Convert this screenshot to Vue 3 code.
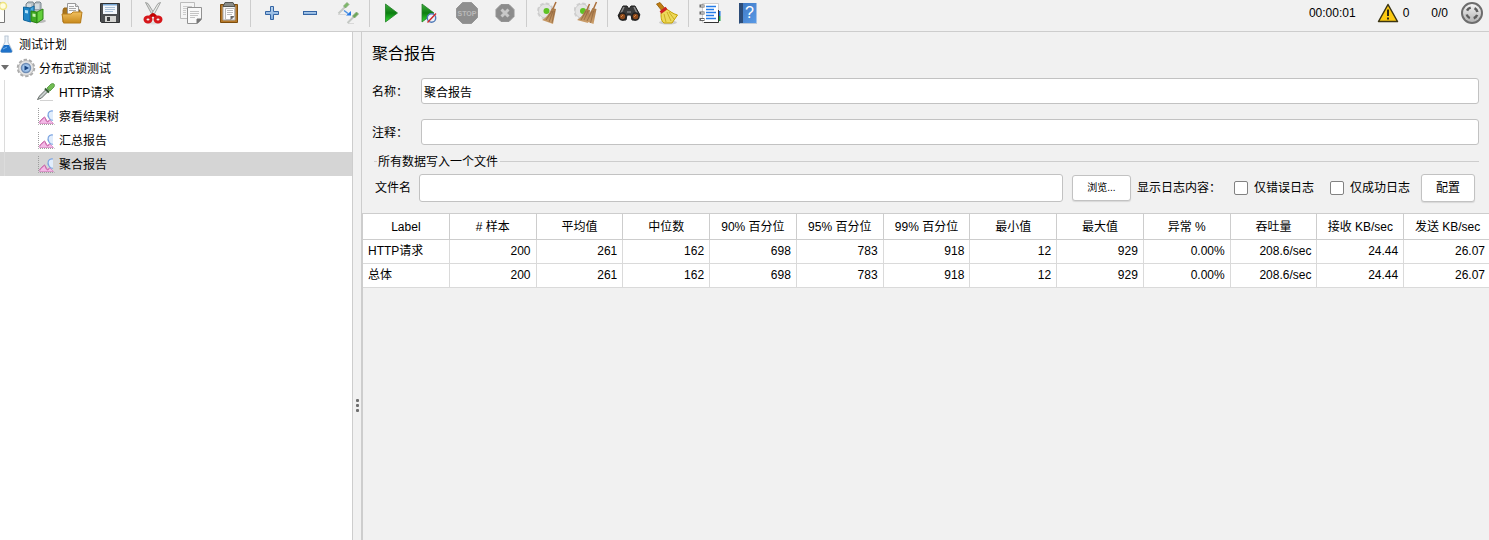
<script setup>
import { ref } from 'vue'

const name = ref('聚合报告')
const comment = ref('')
const fileName = ref('')
const onlyErrors = ref(false)
const onlySuccess = ref(false)
const selected = ref('aggregate')

const tree = [
  { id: 'plan', label: '测试计划', icon: 'flask', level: 0 },
  { id: 'group', label: '分布式锁测试', icon: 'gear', level: 1 },
  { id: 'http', label: 'HTTP请求', icon: 'pipette', level: 2 },
  { id: 'viewtree', label: '察看结果树', icon: 'chart', level: 2 },
  { id: 'summary', label: '汇总报告', icon: 'chart', level: 2 },
  { id: 'aggregate', label: '聚合报告', icon: 'chart', level: 2 },
]

const columns = [
  'Label', '# 样本', '平均值', '中位数', '90% 百分位', '95% 百分位', '99% 百分位',
  '最小值', '最大值', '异常 %', '吞吐量', '接收 KB/sec', '发送 KB/sec',
]
const values = ['200', '261', '162', '698', '783', '918', '12', '929', '0.00%', '208.6/sec', '24.44', '26.07']
const rows = [['HTTP请求', ...values], ['总体', ...values]]
</script>

<template>
  <div class="app">
    <svg class="defs" width="0" height="0" aria-hidden="true">
      <defs>
        <linearGradient id="gFolder" x1="0" y1="0" x2="0" y2="1"><stop offset="0" stop-color="#f0c060" /><stop offset="1" stop-color="#c98a1c" /></linearGradient>
        <linearGradient id="gPlay" x1="0" y1="0" x2="0" y2="1"><stop offset="0" stop-color="#3fae3f" /><stop offset=".5" stop-color="#0c7d10" /><stop offset="1" stop-color="#35e035" /></linearGradient>
        <linearGradient id="gPlus" x1="0" y1="0" x2="0" y2="1"><stop offset="0" stop-color="#b9d3ee" /><stop offset="1" stop-color="#7fabdb" /></linearGradient>
        <linearGradient id="gBook" x1="0" y1="0" x2="1" y2="1"><stop offset="0" stop-color="#3c78c4" /><stop offset="1" stop-color="#5a9ae6" /></linearGradient>
        <linearGradient id="gGrey" x1="0" y1="0" x2="0" y2="1"><stop offset="0" stop-color="#f4f4f4" /><stop offset="1" stop-color="#b4b4b4" /></linearGradient>
        <linearGradient id="gStraw" x1="0" y1="0" x2="0" y2="1"><stop offset="0" stop-color="#a87848" /><stop offset="1" stop-color="#cda06c" /></linearGradient>
      </defs>
    </svg>

    <header class="toolbar">
      <div class="tools">
        <button class="tool" type="button" aria-label="新建">
          <svg viewBox="0 0 24 24"><path d="M4 2h16.500v19.500H4z" fill="#fdfdfb" stroke="#777" /><circle cx="19" cy="5" r="3.500" fill="#fffde0" stroke="#efe480" stroke-width="1.500" /></svg>
        </button>
        <button class="tool" type="button" aria-label="模板">
          <svg viewBox="0 0 24 24">
            <ellipse cx="16" cy="20" rx="8" ry="2" fill="#bbb" />
            <path d="M4 3l2-2h5l1 2v6H4zM12 3l2-2h4l1 1v7h-7z" fill="#b9c3c9" stroke="#7b878e" />
            <path d="M6 3v6M8 3v6M14 3v5M16 3v5" stroke="#eef3f6" />
            <path d="M1.500 6l7 1v14l-7-2z" fill="#2187c6" stroke="#0f659d" /><path d="M8 7l4-2v13l-4 3z" fill="#4aa8df" stroke="#0f659d" />
            <path d="M3 9l3 .5v3l-3-.5z" fill="#aee0f8" />
            <path d="M9 10l6 1v11l-6-2z" fill="#3faa22" stroke="#2b8412" /><path d="M15 11l6-3v10l-6 4z" fill="#63cf3c" stroke="#2b8412" />
            <path d="M10.500 12.500l3 .5v3l-3-.5z" fill="#c8f3ae" />
          </svg>
        </button>
        <button class="tool" type="button" aria-label="打开">
          <svg viewBox="0 0 24 24">
            <path d="M3 9l1-2h5l1 2h10v12H3z" fill="#a8751d" stroke="#94651a" />
            <path d="M7.500 2.500h8l3 3v8h-11z" fill="#fafafa" stroke="#999" /><path d="M15.500 2.500v3h3" fill="#ddd" stroke="#999" /><path d="M9 5.500h5M9 7.500h7M9 9.500h7" stroke="#aaa" />
            <path d="M2 13h9l2-2h9l-1.500 11h-17z" fill="url(#gFolder)" stroke="#b67c1b" />
          </svg>
        </button>
        <button class="tool" type="button" aria-label="保存">
          <svg viewBox="0 0 24 24">
            <path d="M2.500 2.500h19v19h-18l-1-1z" fill="#4c4e50" stroke="#303234" />
            <path d="M5 3h14v10H5z" fill="#f3f7fb" /><path d="M5 3h14v1.500H5z" fill="#78a7d4" /><path d="M7 6.500h10M7 8.500h10M7 10.500h8" stroke="#a9c0d7" />
            <path d="M7 15h11v6H7z" fill="#d6d6d3" /><path d="M9 16h3v4H9z" fill="#3b3d3f" />
          </svg>
        </button>
        <span class="sep"></span>
        <button class="tool" type="button" aria-label="剪切">
          <svg viewBox="0 0 24 24">
            <ellipse cx="12" cy="22" rx="7" ry="1.500" fill="#ddd" />
            <path d="M4.500 1.500l2.500 1 7.500 12-2.500 1z" fill="#d8dad8" stroke="#8d8f8d" stroke-width=".8" /><path d="M19.500 1.500l-2.500 1-7.500 12 2.500 1z" fill="#eceeec" stroke="#8d8f8d" stroke-width=".8" />
            <path d="M9 15.500l3-2 3 2" stroke="#c40000" stroke-width="3" fill="none" />
            <ellipse cx="7" cy="18.500" rx="3" ry="2.600" fill="none" stroke="#d6161a" stroke-width="3" /><ellipse cx="17" cy="18.500" rx="3" ry="2.600" fill="none" stroke="#d6161a" stroke-width="3" />
          </svg>
        </button>
        <button class="tool" type="button" aria-label="复制">
          <svg viewBox="0 0 24 24">
            <path d="M1.500 1.500h14v16h-14z" fill="#f5f5f5" stroke="#bcbcbc" /><path d="M4 5.500h9M4 7.500h9M4 9.500h3M4 11.500h3M4 13.500h3" stroke="#ccc" />
            <path d="M8.500 6.500h14v12l-4 4h-10z" fill="#f9f9f9" stroke="#929292" /><path d="M11 10.500h9M11 12.500h9M11 14.500h8M11 16.500h5" stroke="#c4c4c4" /><path d="M22 18l-4 4v-4z" fill="#777" stroke="#777" />
          </svg>
        </button>
        <button class="tool" type="button" aria-label="粘贴">
          <svg viewBox="0 0 24 24">
            <path d="M3.500 3.500h17v18h-17z" fill="#b5782a" stroke="#7d4d0c" /><path d="M6 5h12v14H6z" fill="#f7f7f7" stroke="#aaa" />
            <path d="M8 1.500h8l2 4H6z" fill="#8a8c88" stroke="#555753" />
            <path d="M8.500 7.500h9v8l-3 3h-6z" fill="#fff" stroke="#bbb" /><path d="M10 9.500h6M10 11.500h6M10 13.500h5" stroke="#bbb" /><path d="M17.500 15l-4 4v-4z" fill="#666" />
          </svg>
        </button>
        <span class="sep"></span>
        <button class="tool" type="button" aria-label="展开">
          <svg viewBox="0 0 24 24"><path d="M10.500 5.500h3v5h5v3h-5v5h-3v-5h-5v-3h5z" fill="url(#gPlus)" stroke="#3465a4" stroke-linejoin="round" /></svg>
        </button>
        <button class="tool" type="button" aria-label="折叠">
          <svg viewBox="0 0 24 24"><rect x="5.500" y="10.500" width="13" height="3" fill="url(#gPlus)" stroke="#3465a4" /></svg>
        </button>
        <button class="tool" type="button" aria-label="切换">
          <svg viewBox="0 0 24 24">
            <path d="M2 13.500h8M12 22.500h6" stroke="#d8d8d8" /><path d="M2.500 12.500l7-7" stroke="#c4c8c4" stroke-width="2" /><path d="M7.500 5l3.500-3.500 2 2L9.500 7z" fill="#7ab966" stroke="#89a77a" stroke-width=".8" />
            <path d="M11.500 22l7-7" stroke="#c4c8c4" stroke-width="2" /><path d="M16.500 15l4-4 2 2-4 4z" fill="#6ba758" stroke="#89a77a" stroke-width=".8" />
            <path d="M8 9.500l4 3" stroke="#4e92e2" stroke-width="1.500" /><path d="M10 14.500h5V10z" fill="#2478e4" />
          </svg>
        </button>
        <span class="sep"></span>
        <button class="tool" type="button" aria-label="启动">
          <svg viewBox="0 0 24 24"><path d="M6.500 3l12 9-12 9z" fill="url(#gPlay)" stroke="#237f27" stroke-width=".8" /></svg>
        </button>
        <button class="tool" type="button" aria-label="不停顿开始">
          <svg viewBox="0 0 24 24"><path d="M5 3l12 9-12 9z" fill="url(#gPlay)" stroke="#237f27" stroke-width=".8" /><circle cx="14.500" cy="17" r="4.200" fill="#eef3fa" stroke="#4f79b6" stroke-width="1.400" /><path d="M10.500 21.500l8.500-9" stroke="#d02a2a" stroke-width="1.400" /></svg>
        </button>
        <button class="tool" type="button" aria-label="停止" disabled>
          <svg viewBox="0 0 24 24"><path d="M7.500 1.500h9l6 6v9l-6 6h-9l-6-6v-9z" fill="#8e8e8e" stroke="#969696" /><text x="12" y="15" text-anchor="middle" class="stop-text">STOP</text></svg>
        </button>
        <button class="tool" type="button" aria-label="关闭" disabled>
          <svg viewBox="0 0 24 24"><path d="M8 3.500h8l5 5v7l-5 5H8l-5-5v-7z" fill="#8c8c8c" stroke="#949494" /><path d="M8.500 8.500l7 7M15.500 8.500l-7 7" stroke="#c8c8c8" stroke-width="3" /></svg>
        </button>
        <span class="sep"></span>
        <button class="tool" type="button" aria-label="清除">
          <svg viewBox="0 0 24 24">
            <circle cx="9.500" cy="10" r="7" fill="#e8e8e8" stroke="#d0d0d0" stroke-width="3" stroke-dasharray="3.500 2" /><circle cx="9.500" cy="10" r="7" fill="#e4e4e4" stroke="#c4c4c4" stroke-width=".7" /><circle cx="10.500" cy="10" r="3" fill="#5fc324" />
            <path d="M20 1l-4 9" stroke="#aa703c" stroke-width="1.500" /><path d="M16 7l4 1-3 15-11-4c4-2 7-6 10-12z" fill="url(#gStraw)" /><path d="M16 10l-6 9M17 10l-4 11M18.500 10l-2.500 12" stroke="#8c633d" stroke-width=".7" />
          </svg>
        </button>
        <button class="tool" type="button" aria-label="清除全部">
          <svg viewBox="0 0 24 24">
            <circle cx="8" cy="10" r="7" fill="#e8e8e8" stroke="#d0d0d0" stroke-width="3" stroke-dasharray="3.500 2" /><circle cx="8" cy="10" r="7" fill="#e4e4e4" stroke="#c4c4c4" stroke-width=".7" /><circle cx="9" cy="10" r="3" fill="#5fc324" />
            <path d="M15.500 3l-3 7M22.500 1l-4 9" stroke="#aa703c" stroke-width="1.500" /><path d="M12 8l4 1-2 13-11-3c4-2 6-6 9-11z" fill="url(#gStraw)" /><path d="M18.500 7l4 1-3 15-11-4c4-2 7-6 10-12z" fill="url(#gStraw)" /><path d="M12 10l-5 9M14 10l-4 9M18 10l-5 10M19.500 10l-3 12" stroke="#8c633d" stroke-width=".7" />
          </svg>
        </button>
        <span class="sep"></span>
        <button class="tool" type="button" aria-label="查找">
          <svg viewBox="0 0 24 24">
            <path d="M6 5h4l2 3 2-3h4l5 9-4 5h-4l-1-5h-4l-1 5H5l-4-4z" fill="#3a3a3a" stroke="#1d1d1d" /><path d="M7 6l-3 6M17 6l3 6" stroke="#8b8b8b" stroke-width="1.500" />
            <circle cx="5.500" cy="15.500" r="3.500" fill="#8d4a1c" stroke="#222" stroke-width="1.500" /><circle cx="18.500" cy="15.500" r="3.500" fill="#8d4a1c" stroke="#222" stroke-width="1.500" /><path d="M4 16l2-2M17 16l2-2" stroke="#d58a4a" /><path d="M10 11h4" stroke="#999" />
          </svg>
        </button>
        <button class="tool" type="button" aria-label="重置搜索">
          <svg viewBox="0 0 24 24">
            <ellipse cx="13" cy="21.500" rx="9" ry="2" fill="#ccc" />
            <path d="M1.500 3l3.500-1.500 5 6-3 2.500z" fill="#c17d11" stroke="#8f5902" stroke-width=".8" />
            <path d="M10 7c4 2.500 8 6 12.500 7L17 22H9c-3-2-3-6-3-10z" fill="#edd95a" stroke="#c4a000" /><path d="M9 13l2 8M12 11l4 9M14 11l5 7" stroke="#cbae22" /><path d="M5.500 11.500l6-4.500" stroke="#cc2222" stroke-width="3" />
          </svg>
        </button>
        <span class="sep"></span>
        <button class="tool" type="button" aria-label="函数助手">
          <svg viewBox="0 0 24 24">
            <path d="M20 10h2.500v5H20z" fill="#1870e0" /><path d="M20 15h2.500v5H20z" fill="#18a040" /><path d="M4.500 2.500h16v19h-16z" fill="#fff" stroke="#cfcfcf" /><path d="M20.500 9v12.500H6" fill="none" stroke="#333" />
            <path d="M1.500 5h5M1.500 12h5M1.500 18.500h5" stroke="#666" stroke-width="3" /><path d="M3 5h3M3 12h3M3 18.500h3" stroke="#fff" /><path d="M8 5.500h10M8 8.500h8M8 11.500h10M8 14.500h8M8 17.500h10" stroke="#247ce8" stroke-width="1.400" />
          </svg>
        </button>
        <button class="tool" type="button" aria-label="帮助">
          <svg viewBox="0 0 24 24"><path d="M3.500 2h17v20.500h-17z" fill="url(#gBook)" /><path d="M3 2h4v20.500H3z" fill="#2c4c78" /><path d="M4 22.500h17" stroke="#bfc9d6" /><text x="13.500" y="17" text-anchor="middle" class="help-text">?</text></svg>
        </button>
      </div>
      <div class="status">
        <span class="clock">00:00:01</span>
        <button class="warn" type="button" aria-label="日志">
          <svg viewBox="0 0 22 20"><path d="M11 1.500L20.500 18.500h-19z" fill="#fcca12" stroke="#3b3412" stroke-width="1.500" stroke-linejoin="round" /><path d="M11 6.500v6.500M11 14.500v2" stroke="#2e2a14" stroke-width="2" /></svg>
          <span>0</span>
        </button>
        <span class="threads">0/0</span>
        <svg class="ring" viewBox="0 0 24 24" aria-hidden="true"><circle cx="12" cy="12" r="10" fill="#7c7c7c" stroke="#6d6d6d" stroke-width="2" /><circle cx="12" cy="12" r="9" fill="url(#gGrey)" /><circle cx="12" cy="12" r="5.500" fill="none" stroke="#5d5d5d" stroke-width="2.500" stroke-dasharray="4.640 4" stroke-dashoffset="-2" /></svg>
      </div>
    </header>

    <main class="body">
      <nav class="tree" aria-label="测试计划">
        <button
          v-for="item in tree" :key="item.id" type="button"
          class="node" :class="['level' + item.level, { selected: selected === item.id }]"
          @click="selected = item.id"
        >
          <svg v-if="item.level === 1" class="arrow" viewBox="0 0 10 6"><path d="M1 0h8L5 5z" fill="#6e6e6e" /></svg>
          <svg v-if="item.icon === 'flask'" class="icon" viewBox="0 0 20 20">
            <path d="M11.500 2h4M12 2v6l-4 8q-1 2.500 1 2.500h9q2 0 1-2.500l-4-8V2" fill="#eef4fa" stroke="#b9c6d4" /><path d="M11 11h5l3 6q0 1.500-1 1.500H9q-2 0-1-2.500z" fill="#1f72c9" /><path d="M10 15l4-2" stroke="#75b3ee" />
          </svg>
          <svg v-else-if="item.icon === 'gear'" class="icon" viewBox="0 0 20 20">
            <circle cx="10" cy="10" r="8" fill="none" stroke="#ababab" stroke-width="2.500" stroke-dasharray="3.200 1.830" /><circle cx="10" cy="10" r="7.500" fill="#e2e2e2" stroke="#b4b4b4" stroke-width=".8" /><circle cx="10" cy="10" r="4.500" fill="#a0c4ec" stroke="#6f8db5" stroke-width="1.500" /><path d="M8.500 7.500l4.500 2.500-4.500 2.500z" fill="#17427f" />
          </svg>
          <svg v-else-if="item.icon === 'pipette'" class="icon" viewBox="0 0 20 20">
            <path d="M4 18.500h13" stroke="#d2d2d2" /><path d="M1.500 17.500l2-3.500 7-7 2 2-7 7z" fill="#c9d0cf" stroke="#646b68" /><path d="M9 6.500l4 4" stroke="#345c31" stroke-width="2" /><path d="M11 6l4-4q2-1 3 0t0 3l-4 4z" fill="#72bd53" stroke="#4c923c" stroke-width=".8" />
          </svg>
          <svg v-else class="icon" viewBox="0 0 20 20">
            <path d="M2.500 2v16.500h16" fill="none" stroke="#9d9d9d" stroke-dasharray="1 1" /><path d="M3.500 17.500l1-3 3-3 2 1 2 3 2-2 4 4z" fill="#f3b8e6" stroke="#d486c0" stroke-width=".8" /><path d="M3.500 15.500c3-1 5-7 6-3s2 4 4 2" fill="none" stroke="#c4559f" /><path d="M17 5c-5-1-6 4-4 7q2 3 4 2" fill="#e1edfc" stroke="#7ba4e0" stroke-width="1.200" />
          </svg>
          <span>{{ item.label }}</span>
        </button>
      </nav>

      <div class="divider"><i></i><i></i><i></i></div>

      <section class="panel">
        <form class="form" @submit.prevent>
          <h1>聚合报告</h1>
          <div class="field"><label for="name">名称：</label><input id="name" v-model="name" type="text" /></div>
          <div class="field"><label for="comment">注释：</label><input id="comment" v-model="comment" type="text" /></div>
          <fieldset>
            <legend>所有数据写入一个文件</legend>
            <div class="file-row">
              <label for="file">文件名</label>
              <input id="file" v-model="fileName" type="text" />
              <button class="btn browse" type="button">浏览...</button>
              <span class="log-label">显示日志内容：</span>
              <label class="check"><input v-model="onlyErrors" type="checkbox" />仅错误日志</label>
              <label class="check"><input v-model="onlySuccess" type="checkbox" />仅成功日志</label>
              <button class="btn config" type="button">配置</button>
            </div>
          </fieldset>
        </form>
        <div class="results">
          <table>
            <thead><tr><th v-for="c in columns" :key="c" scope="col">{{ c }}</th></tr></thead>
            <tbody>
              <tr v-for="r in rows" :key="r[0]"><td v-for="(v, i) in r" :key="i">{{ v }}</td></tr>
            </tbody>
          </table>
        </div>
      </section>
    </main>
  </div>
</template>

<style>
body { margin: 0; background: #f1f1f1; }
</style>

<style scoped>
.app {
  display: flex;
  flex-direction: column;
  min-height: 100vh;
  overflow: hidden;
  background: #f1f1f1;
  color: #000;
  font: 12px/16px "Liberation Sans", "Noto Sans CJK SC", sans-serif;
}
.app *, .app *::before { box-sizing: border-box; }
.defs { position: absolute; }
button, input { font: inherit; color: inherit; }
button { padding: 0; border: 0; background: none; }

.toolbar {
  display: flex;
  justify-content: space-between;
  align-items: flex-start;
  height: 32px;
  border-bottom: 1px solid #cdcdcd;
}
.tools { display: flex; margin-left: -23px; }
.tool { display: flex; justify-content: center; align-items: center; width: 38px; height: 26px; }
.tool svg { width: 24px; height: 24px; }
.sep { width: 1px; height: 27px; margin: 0 2px; background: #cdcdcd; }
.stop-text { font: bold 7px "Liberation Sans", sans-serif; fill: #bababa; }
.help-text { font: 16px "Liberation Sans", sans-serif; fill: #fff; }
.status { display: flex; align-items: center; height: 26px; padding-right: 5px; }
.warn { display: flex; align-items: center; gap: 4px; margin: 0 22px 0 21px; }
.warn svg { width: 22px; height: 20px; }
.ring { width: 24px; height: 24px; margin-left: 12px; }

.body { display: flex; flex: 1; }
.tree { width: 352px; flex: none; background: #fff; }
.node { display: flex; align-items: center; width: 100%; height: 24px; text-align: left; white-space: nowrap; }
.node span { padding-top: 2px; }
.node .icon { width: 20px; height: 20px; margin-right: 3px; flex: none; }
.node .arrow { width: 10px; height: 6px; margin-right: 6px; }
.level0 .icon { margin-left: -7px; margin-right: 6px; }
.level2::before { content: ""; width: 1px; height: 24px; margin: 0 31px 0 4px; background: #dcdcdc; }
.selected { background: #d5d5d5; }

.divider {
  display: flex;
  flex-direction: column;
  align-items: center;
  justify-content: center;
  gap: 2px;
  flex: none;
  width: 10px;
  padding-top: 238px;
  border: solid #cdcdcd;
  border-width: 0 1px;
}
.divider i { width: 3px; height: 3px; border-radius: 1px; background: #6e6e6e; }

.panel { display: flex; flex: 1; flex-direction: column; min-width: 0; }
.form { padding: 10px 10px 0; }
h1 { margin: 0 0 12px; font-size: 16px; font-weight: 400; line-height: 24px; }
.field { display: flex; align-items: center; margin-bottom: 15px; }
.field label { width: 49px; padding-top: 2px; flex: none; }
input[type="text"] {
  flex: 1;
  min-width: 0;
  height: 26px;
  padding: 0 2px;
  border: 1px solid #c2c2c2;
  border-radius: 3px;
  outline: 0;
  background: #fff;
}
fieldset { min-width: 0; margin: -8px 0 0 2px; padding: 4px 4px 11px 1px; border: 0 solid #cdcdcd; border-top-width: 1px; }
legend { margin-left: 2px; padding: 2px 2px 0 1px; }
.file-row { display: flex; align-items: center; }
.file-row input[type="text"] { height: 28px; margin: 0 9px 0 8px; }
.btn { border: 1px solid #c2c2c2; border-radius: 3px; background: #fff; box-shadow: 0 1px 1px #d8d8d8; }
.browse { width: 59px; height: 26px; font-size: 10px; }
.config { width: 54px; height: 28px; margin-left: 11px; }
.log-label { margin: 0 13px 0 6px; }
.check { display: flex; align-items: center; gap: 6px; }
.check + .check { margin-left: 16px; }
.check input {
  appearance: none;
  width: 14px;
  height: 14px;
  margin: 0;
  border: 1px solid #828282;
  border-radius: 2px;
  background: #fff;
}
.check input:checked { background: #5a8fd0; }

.results { flex: 1; overflow: hidden; border: solid #cdcdcd; border-width: 1px 0 0 1px; }
table { width: calc(100% + 2px); border-collapse: separate; border-spacing: 0; table-layout: fixed; background: #fff; }
th, td {
  height: 24px;
  padding: 0 5px 2px;
  border: solid #dadada;
  border-width: 0 1px 1px 0;
  font-weight: 400;
  text-align: right;
  white-space: nowrap;
}
th { height: 26px; padding: 0; border-color: #cdcdcd; text-align: center; }
td:first-child { text-align: left; }
th:last-child, td:last-child { border-right: 0; }
td:last-child { padding-right: 6px; }
</style>
